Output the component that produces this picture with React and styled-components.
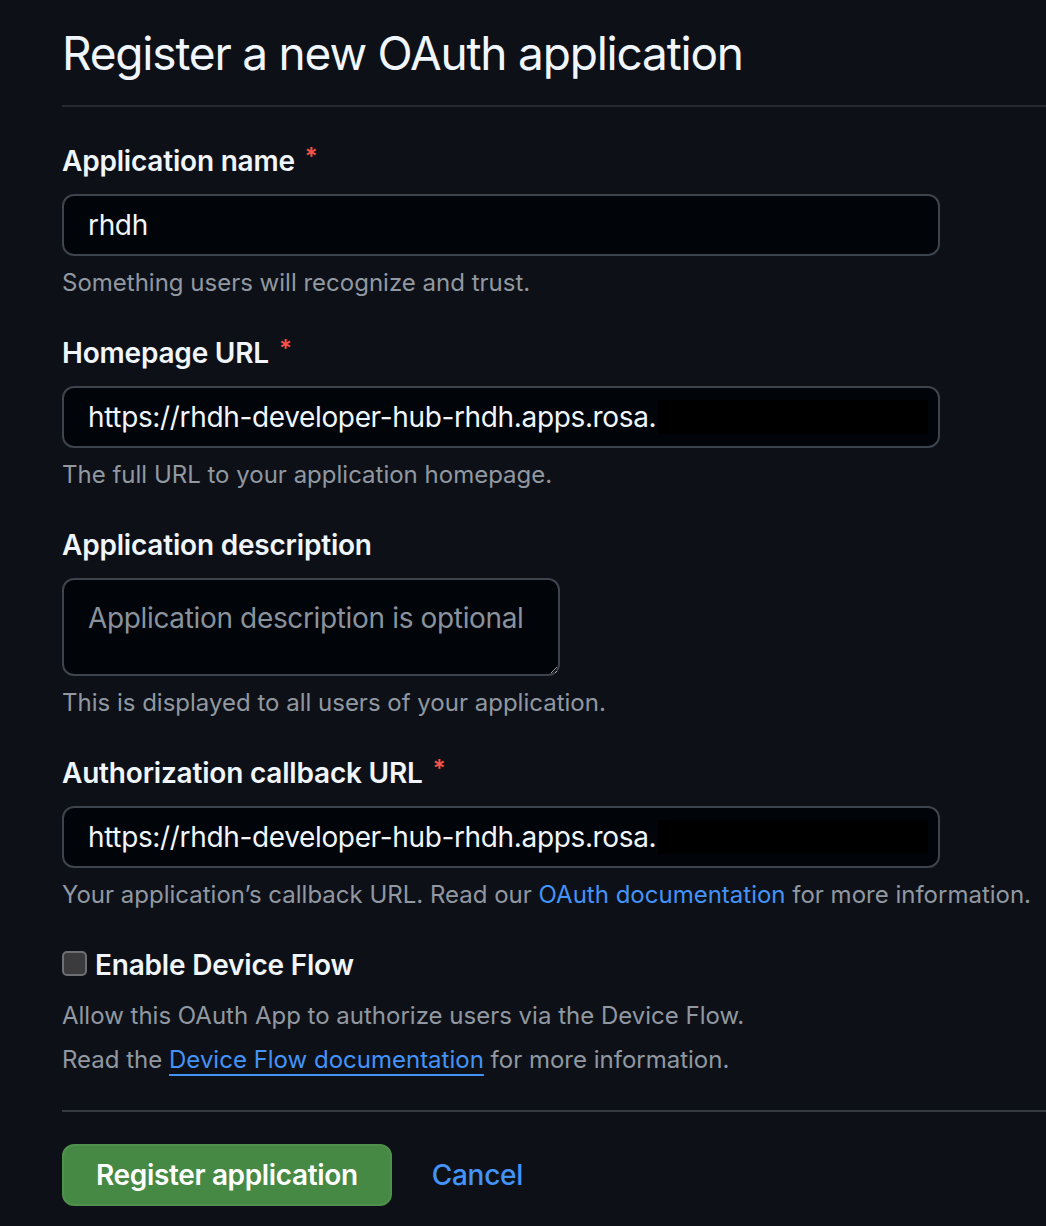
import React from 'react';
import styled, { createGlobalStyle } from 'styled-components';

const GlobalStyle = createGlobalStyle`
  html, body {
    margin: 0;
    padding: 0;
    background: #0d1117;
    color-scheme: dark;
  }
  body {
    font-family: Inter, 'Noto Sans', 'Liberation Sans', sans-serif;
    overflow: hidden;
  }
`;

const Page = styled.div`
  padding: 0 0 40px 62px;
  color: #f0f6fc;
`;

const Header = styled.div`
  padding: 23px 0 22px;
  border-bottom: 2px solid #262a31;
  margin-bottom: 34px;
`;

const Title = styled.h1`
  margin: 0;
  font-size: 46px;
  line-height: 60px;
  font-weight: 400;
  letter-spacing: -1.2px;
  color: #f0f6fc;
`;

const Group = styled.div`
  margin-bottom: 32px;
`;

const Label = styled.label`
  display: block;
  font-size: 28px;
  line-height: 40px;
  font-weight: 600;
  letter-spacing: -0.2px;
  color: #f0f6fc;
  margin-bottom: 13px;
`;

const Required = styled.span`
  color: #f85149;
  margin-left: 10px;
  font-size: 24px;
  vertical-align: top;
  position: relative;
  top: -4px;
`;

const InputBox = styled.div`
  box-sizing: border-box;
  display: flex;
  align-items: center;
  width: 878px;
  height: 62px;
  padding: 0 10px 0 24px;
  background: #010409;
  border: 2px solid #3d444d;
  border-radius: 12px;
  font-size: 28px;
  letter-spacing: -0.35px;
  color: #f0f6fc;
`;

const Redacted = styled.span`
  flex: 1;
  align-self: stretch;
  margin: 12px 0 12px 2px;
  background: #000;
`;

const TextArea = styled.textarea`
  box-sizing: border-box;
  display: block;
  width: 498px;
  height: 98px;
  padding: 18px 12px 18px 24px;
  background: #010409;
  border: 2px solid #3d444d;
  border-radius: 12px;
  font-family: inherit;
  font-size: 28px;
  line-height: 40px;
  letter-spacing: -0.35px;
  color: #f0f6fc;
  resize: vertical;
  overflow: hidden;
  outline: none;
  &::placeholder {
    color: #8a929c;
  }
`;

const Note = styled.p`
  margin: ${(p) => p.$top || 9}px 0 0;
  font-size: 24px;
  line-height: 36px;
  color: #9198a1;
`;

const Link = styled.a`
  color: #4493f8;
  text-decoration: ${(p) => (p.$underline ? 'underline' : 'none')};
  text-underline-offset: 6px;
  text-decoration-thickness: 2px;
`;

const CheckRow = styled.label`
  display: flex;
  align-items: center;
  gap: 8px;
  font-size: 28px;
  line-height: 40px;
  font-weight: 600;
  letter-spacing: -0.2px;
  color: #f0f6fc;
`;

const Box = styled.span`
  box-sizing: border-box;
  width: 25px;
  height: 25px;
  margin-top: -4px;
  border-radius: 5px;
  background: #3b3b3d;
  border: 2px solid #6e6f73;
`;

const Divider = styled.hr`
  margin: 32px 0 32px;
  border: 0;
  border-top: 2px solid #363b42;
`;

const Actions = styled.div`
  display: flex;
  align-items: center;
  gap: 40px;
`;

const Primary = styled.button`
  box-sizing: border-box;
  height: 62px;
  padding: 0 32px;
  background: #468944;
  border: 2px solid #4f914c;
  border-radius: 12px;
  font-family: inherit;
  font-size: 28px;
  font-weight: 600;
  letter-spacing: -0.35px;
  color: #fff;
`;

const Cancel = styled.a`
  font-size: 28px;
  font-weight: 500;
  letter-spacing: -0.3px;
  color: #4493f8;
`;

const fields = [
  { label: 'Application name', value: 'rhdh', note: 'Something users will recognize and trust.' },
  {
    label: 'Homepage URL',
    value: 'https://rhdh-developer-hub-rhdh.apps.rosa.',
    redact: true,
    note: 'The full URL to your application homepage.',
  },
];

export default function App() {
  return (
    <>
      <GlobalStyle />
      <Page>
        <Header>
          <Title>Register a new OAuth application</Title>
        </Header>

        {fields.map((f) => (
          <Group key={f.label}>
            <Label>
              {f.label}
              <Required>*</Required>
            </Label>
            <InputBox>
              <span>{f.value}</span>
              {f.redact && <Redacted />}
            </InputBox>
            <Note>{f.note}</Note>
          </Group>
        ))}

        <Group>
          <Label>Application description</Label>
          <TextArea wrap="off" placeholder="Application description is optional" />
          <Note>This is displayed to all users of your application.</Note>
        </Group>

        <Group>
          <Label>
            Authorization callback URL
            <Required>*</Required>
          </Label>
          <InputBox>
            <span>https://rhdh-developer-hub-rhdh.apps.rosa.</span>
            <Redacted />
          </InputBox>
          <Note>
            Your application’s callback URL. Read our <Link href="#">OAuth documentation</Link> for more
            information.
          </Note>
        </Group>

        <CheckRow>
          <Box />
          Enable Device Flow
        </CheckRow>
        <Note $top={13}>Allow this OAuth App to authorize users via the Device Flow.</Note>
        <Note $top={8}>
          Read the <Link href="#" $underline>Device Flow documentation</Link> for more information.
        </Note>

        <Divider />

        <Actions>
          <Primary>Register application</Primary>
          <Cancel>Cancel</Cancel>
        </Actions>
      </Page>
    </>
  );
}
